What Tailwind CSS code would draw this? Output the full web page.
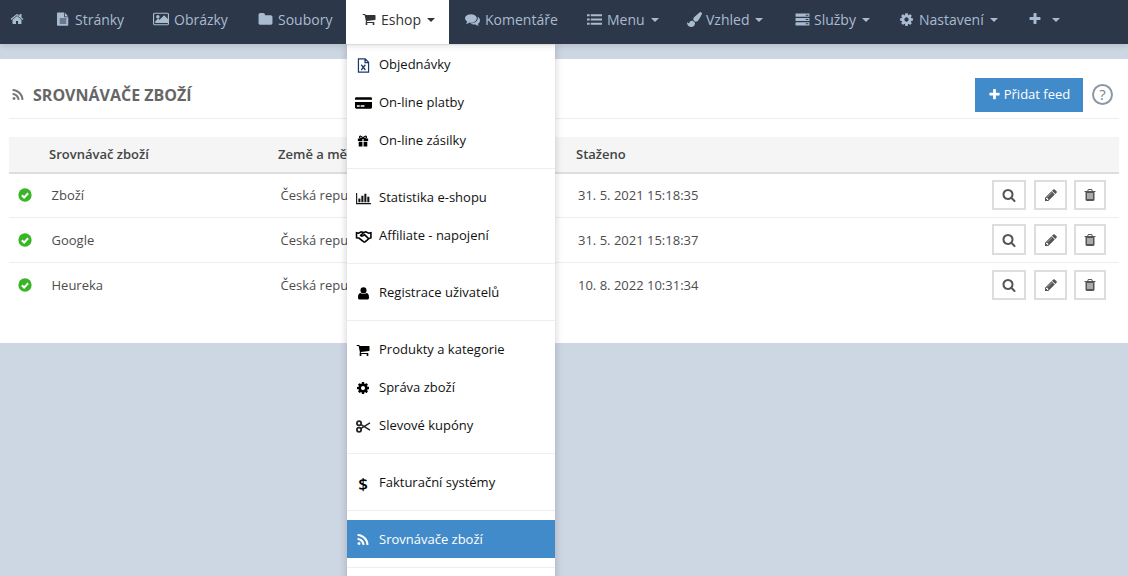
<!DOCTYPE html>
<html lang="cs">
<head>
    <meta charset="UTF-8">
    <title>Srovnávače zboží</title>
    <script src="https://cdn.jsdelivr.net/npm/@tailwindcss/browser@4"></script>
</head>
<body class="h-[576px] overflow-hidden bg-[#cdd6e3] font-['Open_Sans',sans-serif] text-[13px]">
    <!-- Icons -->
    <svg class="hidden">
        <symbol id="i-home" viewBox="0 0 1792 1792"><path fill="currentColor" d="M1472 992v480q0 26-19 45t-45 19h-384v-384H768v384H384q-26 0-45-19t-19-45V992q0-1 .5-3t.5-3l575-474 575 474q1 2 1 6zm223-69l-62 74q-8 9-21 11h-3q-13 0-21-7L896 424l-692 577q-12 8-24 7-13-2-21-11l-62-74q-8-10-7-23.5t11-21.5l719-599q32-26 76-26t76 26l244 204V288q0-14 9-23t23-9h192q14 0 23 9t9 23v408l219 182q10 8 11 21.5t-7 23.5z"/></symbol>
        <symbol id="i-file" viewBox="0 0 1792 1792"><path fill="currentColor" fill-rule="evenodd" d="M224 64h816v496q0 40 28 68t68 28h432v1008q0 40-28 68t-68 28H224q-40 0-68-28t-28-68V160q0-40 28-68t68-28zM1136 64l432 496h-432zM480 832v128h832V832zM480 1088v128h832v-128zM480 1344v128h832v-128z"/></symbol>
        <symbol id="i-image" viewBox="0 0 1792 1792"><path fill="currentColor" fill-rule="evenodd" d="M160 192h1472q66 0 113 47t47 113v1088q0 66-47 113t-113 47H160q-66 0-113-47T0 1440V352q0-66 47-113t113-47zM128 320v1152h1536V320zM544 448q80 0 136 56t56 136-56 136-136 56-136-56-56-136 56-136 136-56zM256 1344v-192l320-320 160 160 512-512 416 416v448z"/></symbol>
        <symbol id="i-folder" viewBox="0 0 1792 1792"><path fill="currentColor" d="M1728 608v704q0 92-66 158t-158 66H288q-92 0-158-66T64 1312V352q0-92 66-158t158-66h320q92 0 158 66t66 158v32h672q92 0 158 66t66 158z"/></symbol>
        <symbol id="i-cart" viewBox="0 0 1792 1792"><path fill="currentColor" d="M704 1536q0 52-38 90t-90 38-90-38-38-90 38-90 90-38 90 38 38 90zm896 0q0 52-38 90t-90 38-90-38-38-90 38-90 90-38 90 38 38 90zm128-1088v512q0 24-16.5 42.5T1671 1024L627 1146q13 60 13 70 0 16-24 64h920q26 0 45 19t19 45-19 45-45 19H512q-26 0-45-19t-19-45q0-11 8-31.5t16-36 21.5-40T509 1207L332 384H128q-26 0-45-19t-19-45 19-45 45-19h256q16 0 28.5 6.5T432 278t13 24.5 8 26 5.5 29.5 4.5 26h1201q26 0 45 19t19 45z"/></symbol>
        <symbol id="i-comments" viewBox="0 0 1792 1792"><path fill="currentColor" d="M1408 768q0 139-94 257t-256.5 186.5T704 1280q-86 0-176-16-124 88-278 128-36 9-86 16h-3q-11 0-20.5-8t-11.5-21q-1-3-1-6.5t.5-6.5 2-6l2.5-5 3.5-5.5 4-5 4.500-5 4-4.500q5-6 23-25t26-29.500 22.500-29 25-38.500 20.500-44Q142 1062 71 964T0 768q0-139 94-257t256.500-186.500T704 256t353.500 68.500T1314 511t94 257zm384 256q0 120-71 224.500T1526 1425q14 33 28.500 60t31.500 49.500 24 30.500 27 30q8 10 4 22-5 13-20 13-50-7-86-16-154-40-278-128-90 16-176 16-271 0-472-132 58 4 88 4 161 0 309-45t264-129q125-92 192-212t67-254q0-77-23-152 129 71 204 178t75 230z"/></symbol>
        <symbol id="i-list" viewBox="0 0 1792 1792"><path fill="currentColor" d="M0 256h320v256H0zM448 256h1344v256H448zM0 768h320v256H0zM448 768h1344v256H448zM0 1280h320v256H0zM448 1280h1344v256H448z"/></symbol>
        <symbol id="i-brush" viewBox="0 0 1792 1792"><path fill="currentColor" d="M1615 0q70 0 122.5 46.5t52.500 116.500q0 63-45 151-332 629-465 752-97 91-218 91-126 0-216.500-92.500t-90.500-219.500q0-128 92-212l638-579q59-54 130-54zm-909 1034q39 76 106.500 130t150.500 76l1 71q4 213-129.500 347t-348.500 134q-123 0-218-46.500t-152.500-127.500-86.500-183-29-220q7 5 41 30t62 44.500 59 36.500 46 17q41 0 55-37 25-66 57.500-112.500t69.500-76 88-47.500 103-25.500 125-10.500z"/></symbol>
        <symbol id="i-server" viewBox="0 0 1792 1792"><path fill="currentColor" fill-rule="evenodd" d="M64 192h1664v384H64zM1280 320v128h320V320zM64 704h1664v384H64zM1280 832v128h320V832zM64 1216h1664v384H64zM1280 1344v128h320v-128z"/></symbol>
        <symbol id="i-cog" viewBox="0 0 1792 1792"><path fill="currentColor" d="M1152 896q0-106-75-181t-181-75-181 75-75 181 75 181 181 75 181-75 75-181zm512-109v222q0 12-8 23t-20 13l-185 28q-19 54-39 91 35 50 107 138 10 12 10 25t-9 23q-27 37-99 108t-94 71q-12 0-26-9l-138-108q-44 23-91 38-16 136-29 186-7 28-36 28H785q-14 0-24.500-8.500T749 1634l-28-184q-49-16-90-37l-141 107q-10 9-25 9-14 0-25-11-126-114-165-168-7-10-7-23 0-12 8-23 15-21 51-66.500t54-70.500q-27-50-41-99l-183-27q-13-2-21-12.500T128 1015V793q0-12 8-23t19-13l186-28q14-46 39-92-40-57-107-138-10-12-10-24 0-10 9-23 26-36 98.500-107.500T465 273q13 0 26 10l138 107q44-23 91-38 16-136 29-186 7-28 36-28h222q14 0 24.500 8.500T1043 158l28 184q49 16 90 37l142-107q9-9 24-9 13 0 25 10 129 119 165 170 7 8 7 22 0 12-8 23-15 21-51 66.500t-54 70.500q26 50 41 98l183 28q13 2 21 12.500t8 23.500z"/></symbol>
        <symbol id="i-plus" viewBox="0 0 1792 1792"><path fill="currentColor" d="M1600 736v192q0 40-28 68t-68 28h-416v416q0 40-28 68t-68 28H800q-40 0-68-28t-28-68v-416H288q-40 0-68-28t-28-68V736q0-40 28-68t68-28h416V224q0-40 28-68t68-28h192q40 0 68 28t28 68v416h416q40 0 68 28t28 68z"/></symbol>
        <symbol id="i-rss" viewBox="0 0 1792 1792"><path fill="currentColor" d="M576 1344q0 80-56 136t-136 56-136-56-56-136 56-136 136-56 136 56 56 136zm512 123q2 28-17 48-18 21-47 21H889q-25 0-43-16.500t-20-41.500q-22-229-184.500-391.500T250 902q-25-2-41.500-20T192 839V704q0-29 21-47 17-17 43-17h5q160 13 306 80.500T826 902q114 113 181.500 259t80.500 306zm512 2q2 27-18 47-18 20-46 20h-143q-26 0-44.500-17.500T1329 1476q-12-215-101-408.500t-231.500-336-336-231.500T252 398q-25-1-42.500-19.500T192 335V192q0-28 20-46 18-18 44-18h3q262 13 501.500 120T1186 542q187 186 294 425.500T1600 1469z"/></symbol>
        <symbol id="i-search" viewBox="0 0 1792 1792"><path fill="currentColor" d="M1216 832q0-185-131.500-316.500T768 384 451.500 515.500 320 832t131.500 316.500T768 1280t316.500-131.500T1216 832zm512 832q0 52-38 90t-90 38q-54 0-90-38l-343-342q-179 124-399 124-143 0-273.500-55.500t-225-150-150-225T64 832t55.500-273.500 150-225 225-150T768 128t273.500 55.500 225 150 150 225T1472 832q0 220-124 399l343 343q37 37 37 90z"/></symbol>
        <symbol id="i-pencil" viewBox="0 0 1792 1792"><path fill="currentColor" d="M491 1536l91-91-235-235-91 91v107h128v128h107zm523-928q0-22-22-22-10 0-17 7l-542 542q-7 7-7 17 0 22 22 22 10 0 17-7l542-542q7-7 7-17zm-54-192l416 416-832 832H128v-416zm683 96q0 53-37 90l-166 166-416-416 166-165q36-38 90-38 53 0 91 38l235 234q37 39 37 91z"/></symbol>
        <symbol id="i-trash" viewBox="0 0 1792 1792"><path fill="currentColor" d="M704 1376v-704q0-14-9-23t-23-9h-64q-14 0-23 9t-9 23v704q0 14 9 23t23 9h64q14 0 23-9t9-23zm256 0v-704q0-14-9-23t-23-9h-64q-14 0-23 9t-9 23v704q0 14 9 23t23 9h64q14 0 23-9t9-23zm256 0v-704q0-14-9-23t-23-9h-64q-14 0-23 9t-9 23v704q0 14 9 23t23 9h64q14 0 23-9t9-23zM672 384h448l-48-117q-7-9-17-11H738q-10 2-17 11zm928 32v64q0 14-9 23t-23 9h-96v948q0 83-47 143.500t-113 60.500H480q-66 0-113-58.500T320 1464V512h-96q-14 0-23-9t-9-23v-64q0-14 9-23t23-9h309l70-167q15-37 54-63t79-26h320q40 0 79 26t54 63l70 167h309q14 0 23 9t9 23z"/></symbol>
        <symbol id="i-check" viewBox="0 0 16 16"><circle cx="8" cy="8" r="7.600" fill="#37b524"/><path d="M4.400 8.200l2.600 2.600 4.600-4.800" fill="none" stroke="#fff" stroke-width="2.300"/></symbol>
        <symbol id="i-excel" viewBox="0 0 16 16"><path fill="none" stroke="currentColor" stroke-width="1.300" d="M2.600 1h7.200l3.600 3.600v10.400H2.600zM9.600 1v4h3.800"/><path fill="none" stroke="currentColor" stroke-width="1.300" d="M5.600 7.200l4.400 5.600M10 7.200l-4.400 5.600"/></symbol>
        <symbol id="i-card" viewBox="0 0 18 14"><path fill="currentColor" fill-rule="evenodd" d="M1.500 1h15q1.500 0 1.500 1.200V3.500H0V2.200Q0 1 1.500 1zM0 6h18v5.800q0 1.200-1.500 1.200h-15Q0 13 0 11.800zM2 9.500v1.500h3V9.500zM6 9.500v1.500h4V9.500z"/></symbol>
        <symbol id="i-gift" viewBox="0 0 14 14"><path fill="currentColor" d="M1 4h5.300v3H1zM7.700 4H13v3H7.700zM2 8h4.300v5.500H2zM7.700 8H12v5.500H7.700z"/><path fill="none" stroke="currentColor" stroke-width="1.400" d="M7 4C5.500 1 3 .8 3 2.500S5 4 7 4zM7 4c1.500-3 4-3.200 4-1.500S9 4 7 4z"/></symbol>
        <symbol id="i-chart" viewBox="0 0 16 14"><path fill="currentColor" d="M0 1h1.200v10.800H16v1.400H0zM2.500 7h2.200v4h-2.200zM5.700 4h2.200v7H5.700zM8.900 2h2.200v9H8.900zM12.100 5h2.200v6h-2.200z"/></symbol>
        <symbol id="i-hands" viewBox="0 0 18 14"><path fill="none" stroke="currentColor" stroke-width="1.700" d="M3.500 3.500l3-1.500 2.500.8 2.500-.8 3 1.500 2.500-.5v5.500l-2 .5-4 3.500q-1 .8-2 0L4 8.700l-2.500-.2V3zM9 3L6 5.800q1 1.200 2.700.2l1.300-1 4 3.700"/></symbol>
        <symbol id="i-user" viewBox="0 0 12 14"><circle cx="6" cy="3.600" r="3.300" fill="currentColor"/><path fill="currentColor" d="M2.500 6.500q3.500 2 7 0 2.500.8 2.500 4.500v1q0 1.500-1.500 1.500h-9Q0 13.500 0 12v-1q0-3.700 2.500-4.500z"/></symbol>
        <symbol id="i-cut" viewBox="0 0 16 14"><g fill="none" stroke="currentColor"><circle cx="3.200" cy="3.400" r="2.300" stroke-width="1.900"/><circle cx="3.200" cy="10.600" r="2.300" stroke-width="1.900"/><path stroke-width="1.500" d="M5 4.800L15 11M5 9.200L15 3"/></g></symbol>
    </svg>

    <!-- Top nav -->
    <nav class="relative z-20 flex h-[44px] bg-[#2c3749] text-[14px] text-[#a9bbd0] shadow-[0_2px_6px_rgba(0,0,0,0.12)]">
        <a class="flex w-[41px] items-center pb-[6px] pl-[10px]"><svg class="h-[14px] w-[14px]"><use href="#i-home"/></svg></a>
        <a class="flex w-[99px] items-center pb-[6px] pl-[15px]"><svg class="mr-[5px] h-[14px] w-[14px]"><use href="#i-file"/></svg>Stránky</a>
        <a class="flex w-[105px] items-center pb-[6px] pl-[13px]"><svg class="mr-[5px] h-[16px] w-[16px]"><use href="#i-image"/></svg>Obrázky</a>
        <a class="flex w-[101px] items-center pb-[6px] pl-[13px]"><svg class="mr-[5px] h-[15px] w-[15px]"><use href="#i-folder"/></svg>Soubory</a>
        <a class="flex w-[103px] items-center bg-white pb-[6px] pl-[16px] text-[#333]"><svg class="mr-[5px] h-[14px] w-[14px]"><use href="#i-cart"/></svg>Eshop<span class="ml-[6px] mt-[1px] border-x-[4px] border-t-[4px] border-x-transparent border-t-current"></span></a>
        <a class="flex w-[122px] items-center pb-[6px] pl-[16px]"><svg class="mr-[5px] h-[15px] w-[15px]"><use href="#i-comments"/></svg>Komentáře</a>
        <a class="flex w-[99px] items-center pb-[6px] pl-[16px]"><svg class="mr-[5px] h-[15px] w-[15px]"><use href="#i-list"/></svg>Menu<span class="ml-[6px] mt-[1px] border-x-[4px] border-t-[4px] border-x-transparent border-t-current"></span></a>
        <a class="flex w-[109px] items-center pb-[6px] pl-[17px]"><svg class="mr-[4px] h-[15px] w-[15px]"><use href="#i-brush"/></svg>Vzhled<span class="ml-[6px] mt-[1px] border-x-[4px] border-t-[4px] border-x-transparent border-t-current"></span></a>
        <a class="flex w-[105px] items-center pb-[6px] pl-[16px]"><svg class="mr-[4px] h-[15px] w-[15px]"><use href="#i-server"/></svg>Služby<span class="ml-[6px] mt-[1px] border-x-[4px] border-t-[4px] border-x-transparent border-t-current"></span></a>
        <a class="flex w-[129px] items-center pb-[6px] pl-[15px]"><svg class="mr-[5px] h-[15px] w-[15px]"><use href="#i-cog"/></svg>Nastavení<span class="ml-[6px] mt-[1px] border-x-[4px] border-t-[4px] border-x-transparent border-t-current"></span></a>
        <a class="flex items-center pb-[6px] pl-[15px]"><svg class="h-[14px] w-[14px]"><use href="#i-plus"/></svg><span class="ml-[10px] mt-[1px] border-x-[4px] border-t-[4px] border-x-transparent border-t-current"></span></a>
    </nav>

    <!-- Dropdown -->
    <div class="absolute left-[347px] top-[44px] z-10 w-[208px] border-t border-[#eee] bg-white text-[13px] text-[#111] shadow-[0_0_8px_rgba(0,0,0,0.2)]">
        <a class="flex h-[38px] items-center pt-[2px]"><span class="flex w-[32px] justify-center"><svg class="h-[15px] w-[15px] text-[#1b3a6b]"><use href="#i-excel"/></svg></span>Objednávky</a>
        <a class="flex h-[38px] items-center pt-[2px]"><span class="flex w-[32px] justify-center"><svg class="h-[14px] w-[17px] text-black"><use href="#i-card"/></svg></span>On-line platby</a>
        <a class="flex h-[38px] items-center pt-[2px]"><span class="flex w-[32px] justify-center"><svg class="h-[12px] w-[12px] text-black"><use href="#i-gift"/></svg></span>On-line zásilky</a>
        <div class="my-[9px] h-px bg-[#eee]"></div>
        <a class="flex h-[38px] items-center pt-[2px]"><span class="flex w-[32px] justify-center"><svg class="h-[13px] w-[15px] text-[#111]"><use href="#i-chart"/></svg></span>Statistika e-shopu</a>
        <a class="flex h-[38px] items-center pt-[2px]"><span class="flex w-[32px] justify-center"><svg class="h-[13px] w-[17px] text-black"><use href="#i-hands"/></svg></span>Affiliate - napojení</a>
        <div class="my-[9px] h-px bg-[#eee]"></div>
        <a class="flex h-[38px] items-center pt-[2px]"><span class="flex w-[32px] justify-center"><svg class="h-[13px] w-[11px] text-black"><use href="#i-user"/></svg></span>Registrace uživatelů</a>
        <div class="my-[9px] h-px bg-[#eee]"></div>
        <a class="flex h-[38px] items-center pt-[2px]"><span class="flex w-[32px] justify-center"><svg class="h-[14px] w-[14px] text-black"><use href="#i-cart"/></svg></span>Produkty a kategorie</a>
        <a class="flex h-[38px] items-center pt-[2px]"><span class="flex w-[32px] justify-center"><svg class="h-[14px] w-[14px] text-black"><use href="#i-cog"/></svg></span>Správa zboží</a>
        <a class="flex h-[38px] items-center pt-[2px]"><span class="flex w-[32px] justify-center"><svg class="h-[13px] w-[15px] text-[#222]"><use href="#i-cut"/></svg></span>Slevové kupóny</a>
        <div class="my-[9px] h-px bg-[#eee]"></div>
        <a class="flex h-[38px] items-center pt-[2px]"><span class="flex w-[32px] justify-center text-[17px] leading-none font-semibold text-black">$</span>Fakturační systémy</a>
        <div class="my-[9px] h-px bg-[#eee]"></div>
        <a class="flex h-[38px] items-center bg-[#428bca] pt-[2px] text-white"><span class="flex w-[32px] justify-center"><svg class="h-[14px] w-[14px]"><use href="#i-rss"/></svg></span>Srovnávače zboží</a>
        <div class="my-[9px] h-px bg-[#eee]"></div>
        <a class="flex h-[38px] items-center"></a>
    </div>

    <!-- Content -->
    <main class="mt-[15px] h-[284px] bg-white px-[9px] text-[13px] text-[#4d4d4d]">
        <div class="flex h-[60px] items-center border-b border-[#eee] pt-[12px]">
            <svg class="ml-[2px] h-[14px] w-[14px] text-[#777]"><use href="#i-rss"/></svg>
            <h1 class="ml-[8px] text-[16px] font-bold uppercase text-[#666]">Srovnávače zboží</h1>
            <a class="ml-auto flex h-[34px] w-[108px] items-center justify-center bg-[#428bca] text-white"><svg class="mr-[3px] h-[13px] w-[13px]"><use href="#i-plus"/></svg>Přidat feed</a>
            <span class="ml-[9px] mr-[6px] flex h-[21px] w-[21px] items-center justify-center rounded-full border-2 border-[#8a97a6] text-[15px] text-[#77838f]">?</span>
        </div>

        <div class="mt-[18px] flex h-[37px] items-center border-b-2 border-[#ddd] bg-[#f5f5f5] font-semibold text-[#444]">
            <span class="ml-[40px] w-[229px]">Srovnávač zboží</span>
            <span class="w-[298px]">Země a měna</span>
            <span>Staženo</span>
        </div>

        <div class="flex h-[44px] items-center border-b border-[#eee]">
            <svg class="mb-[1px] ml-[9px] h-[14px] w-[14px]"><use href="#i-check"/></svg>
            <span class="ml-[19.5px] w-[229px]">Zboží</span>
            <span class="w-[297.5px]">Česká republika</span>
            <span>31. 5. 2021 15:18:35</span>
            <div class="mb-[1px] ml-auto mr-[13px] flex">
                <a class="mr-[8px] flex h-[30px] w-[34px] items-center justify-center border-2 border-[#ddd] text-[#555]"><svg class="h-[14px] w-[14px]"><use href="#i-search"/></svg></a>
                <a class="mr-[7px] flex h-[30px] w-[33px] items-center justify-center border-2 border-[#ddd] text-[#555]"><svg class="h-[14px] w-[14px]"><use href="#i-pencil"/></svg></a>
                <a class="flex h-[30px] w-[32px] items-center justify-center border-2 border-[#ddd] text-[#555]"><svg class="h-[14px] w-[14px]"><use href="#i-trash"/></svg></a>
            </div>
        </div>
        <div class="flex h-[45px] items-center border-b border-[#eee]">
            <svg class="ml-[9px] h-[14px] w-[14px]"><use href="#i-check"/></svg>
            <span class="ml-[19.5px] w-[229px] pt-[1px]">Google</span>
            <span class="w-[297.5px] pt-[1px]">Česká republika</span>
            <span class="pt-[1px]">31. 5. 2021 15:18:37</span>
            <div class="mb-[1px] ml-auto mr-[13px] flex">
                <a class="mr-[8px] flex h-[31px] w-[34px] items-center justify-center border-2 border-[#ddd] text-[#555]"><svg class="h-[14px] w-[14px]"><use href="#i-search"/></svg></a>
                <a class="mr-[7px] flex h-[31px] w-[33px] items-center justify-center border-2 border-[#ddd] text-[#555]"><svg class="h-[14px] w-[14px]"><use href="#i-pencil"/></svg></a>
                <a class="flex h-[31px] w-[32px] items-center justify-center border-2 border-[#ddd] text-[#555]"><svg class="h-[14px] w-[14px]"><use href="#i-trash"/></svg></a>
            </div>
        </div>
        <div class="flex h-[45px] items-center">
            <svg class="mb-[1px] ml-[9px] h-[14px] w-[14px]"><use href="#i-check"/></svg>
            <span class="ml-[19.5px] w-[229px]">Heureka</span>
            <span class="w-[297.5px]">Česká republika</span>
            <span>10. 8. 2022 10:31:34</span>
            <div class="mb-[1px] ml-auto mr-[13px] flex">
                <a class="mr-[8px] flex h-[30px] w-[34px] items-center justify-center border-2 border-[#ddd] text-[#555]"><svg class="h-[14px] w-[14px]"><use href="#i-search"/></svg></a>
                <a class="mr-[7px] flex h-[30px] w-[33px] items-center justify-center border-2 border-[#ddd] text-[#555]"><svg class="h-[14px] w-[14px]"><use href="#i-pencil"/></svg></a>
                <a class="flex h-[30px] w-[32px] items-center justify-center border-2 border-[#ddd] text-[#555]"><svg class="h-[14px] w-[14px]"><use href="#i-trash"/></svg></a>
            </div>
        </div>
    </main>
</body>
</html>
